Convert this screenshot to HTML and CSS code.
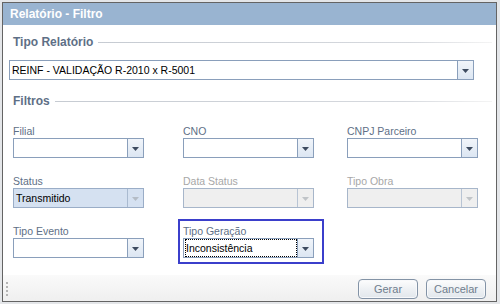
FILE: index.html
```html
<!DOCTYPE html>
<html lang="pt-BR">
<head>
<meta charset="utf-8">
<title>Relatório - Filtro</title>
<link rel="stylesheet" href="styles.css">
</head>
<body>
<div class="window">
  <div class="titlebar">Relatório - Filtro</div>
  <div class="content">
    <div class="legend">Tipo Relatório</div>
    <div class="combo combo-wide">
      <span class="combo-input">REINF - VALIDAÇÃO R-2010 x R-5001</span>
      <span class="trigger"><svg width="7" height="4" viewBox="0 0 7 4"><polygon points="0,0 7,0 3.5,4" fill="#3d4b60"/></svg></span>
    </div>
    <div class="legend legend-filtros">Filtros</div>
    <div class="fields">
      <div class="field">
        <div class="label">Filial</div>
        <div class="combo"><span class="combo-input"></span><span class="trigger"><svg width="7" height="4" viewBox="0 0 7 4"><polygon points="0,0 7,0 3.5,4" fill="#3d4b60"/></svg></span></div>
      </div>
      <div class="field">
        <div class="label">CNO</div>
        <div class="combo"><span class="combo-input"></span><span class="trigger"><svg width="7" height="4" viewBox="0 0 7 4"><polygon points="0,0 7,0 3.5,4" fill="#3d4b60"/></svg></span></div>
      </div>
      <div class="field">
        <div class="label">CNPJ Parceiro</div>
        <div class="combo"><span class="combo-input"></span><span class="trigger"><svg width="7" height="4" viewBox="0 0 7 4"><polygon points="0,0 7,0 3.5,4" fill="#3d4b60"/></svg></span></div>
      </div>

      <div class="field">
        <div class="label">Status</div>
        <div class="combo combo-selected"><span class="combo-input">Transmitido</span><span class="trigger"><svg width="7" height="4" viewBox="0 0 7 4"><polygon points="0,0 7,0 3.5,4" fill="#b4bcc6"/></svg></span></div>
      </div>
      <div class="field">
        <div class="label label-disabled">Data Status</div>
        <div class="combo combo-disabled"><span class="combo-input"></span><span class="trigger"><svg width="7" height="4" viewBox="0 0 7 4"><polygon points="0,0 7,0 3.5,4" fill="#c0c4c8"/></svg></span></div>
      </div>
      <div class="field">
        <div class="label label-disabled">Tipo Obra</div>
        <div class="combo combo-disabled"><span class="combo-input"></span><span class="trigger"><svg width="7" height="4" viewBox="0 0 7 4"><polygon points="0,0 7,0 3.5,4" fill="#c0c4c8"/></svg></span></div>
      </div>

      <div class="field">
        <div class="label">Tipo Evento</div>
        <div class="combo"><span class="combo-input"></span><span class="trigger"><svg width="7" height="4" viewBox="0 0 7 4"><polygon points="0,0 7,0 3.5,4" fill="#3d4b60"/></svg></span></div>
      </div>
      <div class="field field-focus">
        <div class="label">Tipo Geração</div>
        <div class="combo"><span class="combo-input combo-focus">Inconsistência</span><span class="trigger"><svg width="7" height="4" viewBox="0 0 7 4"><polygon points="0,0 7,0 3.5,4" fill="#3d4b60"/></svg></span></div>
      </div>
    </div>
  </div>
  <div class="footer">
    <div class="grip"></div>
    <div class="buttons">
      <button class="btn">Gerar</button>
      <button class="btn">Cancelar</button>
    </div>
  </div>
</div>
</body>
</html>
```
FILE: styles.css
```css
html, body {
  margin: 0;
  padding: 0;
}
body {
  background: #e4e6e9;
  font-family: "Liberation Sans", Arial, sans-serif;
  font-size: 10.5px;
  width: 500px;
  height: 304px;
  overflow: hidden;
}
.window {
  box-sizing: border-box;
  margin: 2px 0 0 2px;
  width: 495px;
  height: 300px;
  border: 1px solid #646464;
  background: #fff;
  display: flex;
  flex-direction: column;
}
.titlebar {
  height: 22px;
  line-height: 22px;
  background: #99b4d1;
  color: #fff;
  font-weight: bold;
  font-size: 12px;
  padding-left: 7px;
}
.content {
  padding: 10px 0 0 6px;
}
.legend {
  display: flex;
  align-items: center;
  height: 14px;
  line-height: 14px;
  padding-left: 4px;
  font-size: 12px;
  font-weight: bold;
  color: #5e6f86;
}
.legend::after {
  content: "";
  flex: 1;
  height: 1px;
  margin: 1px 4px 0 5px;
  background: linear-gradient(to right, #c6cbd2 0%, #d6d9de 80%, #f4f4f4 100%);
}
.legend-filtros {
  margin-top: 14px;
}
.combo {
  box-sizing: border-box;
  display: flex;
  width: 131px;
  height: 20px;
  border: 1px solid #8a9fbb;
  background: #fff;
}
.combo-wide {
  width: 465px;
  margin-top: 11px;
}
.combo-input {
  flex: 1;
  line-height: 18px;
  padding-left: 2px;
  color: #000;
  white-space: nowrap;
  overflow: hidden;
}
.trigger {
  width: 15px;
  border-left: 1px solid #8a9fbb;
  background: linear-gradient(to bottom, #f1f5fa 0%, #dce6f2 100%);
  display: flex;
  align-items: center;
  justify-content: center;
}
.trigger svg {
  display: block;
  margin-top: 1px;
}
.fields {
  display: grid;
  grid-template-columns: 170px 164px 131px;
  row-gap: 16px;
  margin-top: 16px;
  padding-left: 4px;
}
.field {
  display: flex;
  flex-direction: column;
  width: 131px;
}
.label {
  height: 14px;
  line-height: 14px;
  color: #5e6f86;
}
.label-disabled {
  color: #a7a7a7;
}
.combo-selected {
  background: #d5e1f1;
  border-color: #9aadc7;
}
.combo-selected .trigger {
  background: #d5e1f1;
  border-left-color: #a9bad0;
}
.combo-disabled {
  background: #efefef;
  border-color: #a7b6ca;
}
.combo-disabled .trigger {
  background: #efefef;
  border-left-color: #b8c4d4;
}
.field-focus {
  position: relative;
}
.field-focus::after {
  content: "";
  position: absolute;
  top: -5px;
  left: -5px;
  right: -10px;
  bottom: -6px;
  border: 2px solid #3b3fcb;
  pointer-events: none;
}
.combo-focus {
  outline: 1px dotted #000;
  outline-offset: -1px;
  padding-left: 1px;
  margin-left: 1px;
}
.footer {
  margin-top: auto;
  height: 26px;
  box-sizing: border-box;
  background: linear-gradient(to bottom, #fafafa 0%, #efefef 100%);
  display: flex;
  align-items: center;
  padding: 1px 10px 0 3px;
}
.grip {
  width: 2px;
  height: 14px;
  background: repeating-linear-gradient(to bottom, #b4b4b4 0 2px, transparent 2px 4px);
}
.buttons {
  margin-left: auto;
  display: flex;
  gap: 8px;
}
.btn {
  box-sizing: border-box;
  width: 60px;
  height: 20px;
  border: 1px solid #8393a6;
  border-radius: 4px;
  background: linear-gradient(to bottom, #fdfdfd 0%, #eef1f4 50%, #e2e7ec 100%);
  box-shadow: inset 0 0 0 1px #f8f9fb;
  color: #6f7d8d;
  font-family: "Liberation Sans", Arial, sans-serif;
  font-size: 11px;
  padding: 0;
  line-height: 18px;
}
```
